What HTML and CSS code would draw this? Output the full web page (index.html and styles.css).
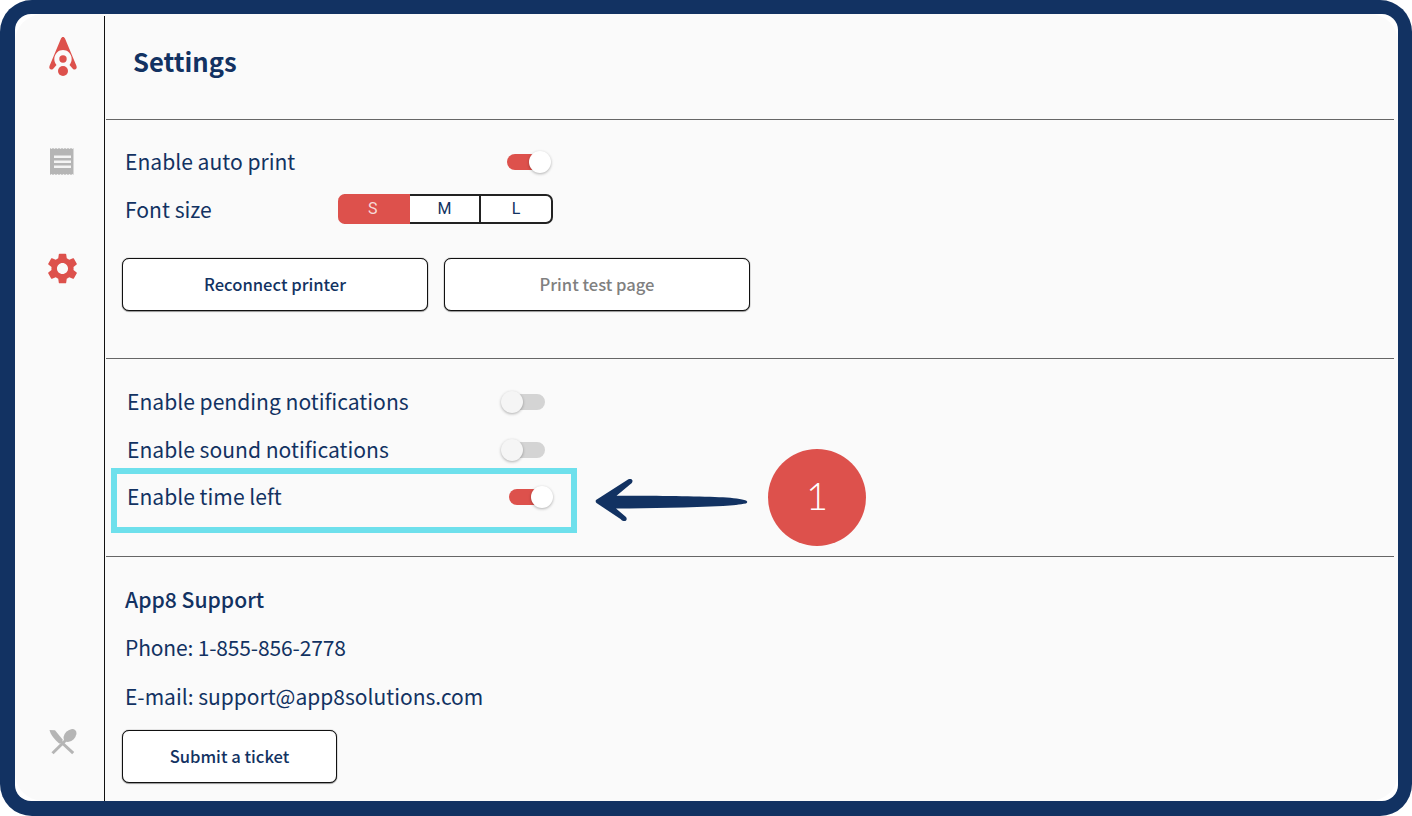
FILE: index.html
```html
<!DOCTYPE html>
<html lang="en">
<head>
    <meta charset="UTF-8">
    <meta name="viewport" content="width=device-width, initial-scale=1.0">
    <title>Settings</title>
    <link rel="stylesheet" href="styles.css">
</head>
<body>
    <div class="frame">
        <div class="screen">
            <div class="screen-inner">
                <nav class="sidebar">
                    <svg class="nav-logo" viewBox="0 0 30 40" width="30" height="40">
                        <path fill="#dd514c" d="M15 0 C16 0 16.500 .6 17 1.500 L28.500 29 C29.500 32 27 33.500 25 32 L21.500 28 C24.500 24.500 24.500 19 21 15.500 C17.500 12.300 12.500 12.300 9 15.500 C5.500 19 5.500 24.500 8.500 28 L5 32 C3 33.500 .5 32 1.500 29 L13 1.500 C13.500 .6 14 0 15 0 Z"/>
                        <circle fill="#dd514c" cx="15" cy="22" r="3.700"/>
                        <circle fill="#dd514c" cx="15" cy="34" r="5"/>
                    </svg>
                    <svg class="nav-receipt" viewBox="0 0 25 27" width="25" height="27">
                        <path fill="#b5b5b5" d="M0 0 l1.500 1 1.500 -1 1.500 1 1.500 -1 1.500 1 1.500 -1 1.500 1 1.500 -1 1.500 1 1.500 -1 1.500 1 1.500 -1 1.500 1 1.500 -1 1.500 1 1 -1 V27 l-1 -1 -1.500 1 -1.500 -1 -1.500 1 -1.500 -1 -1.500 1 -1.500 -1 -1.500 1 -1.500 -1 -1.500 1 -1.500 -1 -1.500 1 -1.500 -1 -1.500 1 -1.500 -1 -1.500 1 Z"/>
                        <path fill="#f4f4f4" d="M4 7.500 H21 V10 H4 Z M4 12.500 H21 V15 H4 Z M4 17.500 H21 V20 H4 Z"/>
                    </svg>
                    <svg class="nav-gear" viewBox="0 0 24 24" width="37" height="37">
                        <path fill="#dd514c" d="M19.140 12.940c.04-.3.060-.61.060-.94 0-.32-.02-.64-.07-.94l2.030-1.580c.18-.14.230-.41.120-.61l-1.920-3.320c-.12-.22-.37-.29-.59-.22l-2.390.96c-.5-.38-1.030-.7-1.620-.94l-.36-2.540c-.04-.24-.24-.41-.48-.41h-3.840c-.24 0-.43.170-.47.410l-.36 2.540c-.59.240-1.130.57-1.620.94l-2.390-.96c-.22-.08-.47 0-.59.220L2.740 8.870c-.12.210-.08.470.12.610l2.030 1.580c-.05.3-.09.630-.09.940s.02.640.07.940l-2.030 1.580c-.18.140-.23.410-.12.610l1.920 3.320c.12.220.37.290.59.220l2.390-.96c.5.380 1.030.7 1.620.94l.36 2.540c.05.240.24.410.48.410h3.840c.24 0 .44-.17.470-.41l.36-2.540c.59-.24 1.130-.56 1.620-.94l2.390.96c.22.080.47 0 .59-.22l1.920-3.320c.12-.22.070-.47-.12-.61l-2.010-1.580zM12 15.600c-1.980 0-3.600-1.620-3.600-3.600s1.620-3.600 3.600-3.600 3.600 1.620 3.600 3.600-1.620 3.600-3.600 3.600z"/>
                    </svg>
                    <svg class="nav-cutlery" viewBox="0 0 28 28" width="28" height="28">
                        <path fill="#b5b5b5" d="M.5 2 L6 2.300 L14 12 L10.500 15.700 C6 12 1.500 7 .5 2 Z"/>
                        <path stroke="#b5b5b5" stroke-width="3" d="M11 13 L24.200 25.200"/>
                        <ellipse fill="#b5b5b5" cx="21" cy="7.500" rx="7.500" ry="5.200" transform="rotate(-45 21 7.500)"/>
                        <path stroke="#b5b5b5" stroke-width="3" d="M17 12 L3.500 25.200"/>
                    </svg>
                </nav>

                <main class="content">
                    <header class="page-header">
                        <h1>Settings</h1>
                    </header>

                    <section class="section printer-section">
                        <div class="row">
                            <span class="label printer-label">Enable auto print</span>
                            <span class="toggle on"></span>
                        </div>
                        <div class="row">
                            <span class="label size-label">Font size</span>
                            <div class="segments">
                                <span class="segment active">S</span>
                                <span class="segment">M</span>
                                <span class="segment">L</span>
                            </div>
                        </div>
                        <div class="btn-row">
                            <button class="btn">Reconnect printer</button>
                            <button class="btn muted">Print test page</button>
                        </div>
                    </section>

                    <section class="section notify-section">
                        <div class="row">
                            <span class="label notify-label">Enable pending notifications</span>
                            <span class="toggle"></span>
                        </div>
                        <div class="row">
                            <span class="label notify-label">Enable sound notifications</span>
                            <span class="toggle"></span>
                        </div>
                        <div class="row">
                            <span class="label time-label">Enable time left</span>
                            <span class="toggle on"></span>
                        </div>
                    </section>

                    <section class="support">
                        <h2>App8 Support</h2>
                        <p class="phone">Phone: 1-855-856-2778</p>
                        <p>E-mail: support@app8solutions.com</p>
                        <button class="btn ticket-btn">Submit a ticket</button>
                    </section>
                </main>
            </div>
        </div>

        <div class="highlight"></div>
        <svg class="arrow" viewBox="0 0 162 52" width="162" height="52">
            <path fill="#123262" d="M6 26 L38 5.500 C40 4.500 42.500 5 42.500 7 C42.500 8.500 41.500 9.500 40 10.500 L26.500 21.700 C60 21.500 110 22 133 23.300 C143 24 152 25 156 26.500 Q158.500 28 156 29.500 C150 30.500 143 31.500 133 32 C100 33.500 60 34.500 26 34.500 L36 43 C37.500 45 36.500 47.500 33.500 47 C32.500 47 31.500 46 30.500 45 L6.500 29 C5.500 28 5.500 27 6 26 Z"/>
        </svg>
        <div class="step-badge">1</div>
    </div>
</body>
</html>
```

FILE: styles.css
```css
* { box-sizing: border-box; }
body {
    margin: 0;
    font-family: "Noto Sans CJK JP", "Noto Sans", sans-serif;
    color: #123262;
    background: #fff;
}
.frame {
    position: relative;
    width: 1412px;
    height: 816px;
    padding: 14px 14px 15px 15px;
    background: #123262;
    border-radius: 32px;
}
.screen {
    height: 100%;
    background: #fff;
    border-radius: 16px;
}
.screen-inner {
    display: flex;
    height: 100%;
    background: #fafafa;
    border-radius: 28px;
}

/* left rail */
.sidebar {
    display: flex;
    flex-direction: column;
    align-items: center;
    width: 90px;
    height: 785px;
    margin-top: 2px;
    border-right: 1px solid #111;
    padding-left: 6px;
}
.sidebar svg { display: block; flex: none; }
.nav-logo { margin-top: 21px; }
.nav-receipt { margin-top: 71px; }
.nav-gear { margin-top: 75px; margin-right: 1px; }
.nav-cutlery { margin-top: auto; margin-bottom: 45px; }

.content { flex: 1; padding-right: 4px; }
.page-header {
    height: 106px;
    padding: 30px 0 0 27px;
    border-bottom: 1px solid #666;
    margin-left: 1px;
}
h1 {
    margin: 0;
    font-size: 25.600px;
    line-height: 34px;
    font-weight: 700;
}
.section {
    margin-left: 1px;
    border-bottom: 1px solid #666;
}
.printer-section { height: 239px; padding: 18px 0 0 19px; }
.notify-section { height: 198px; padding: 19px 0 0 21px; }
.row {
    display: flex;
    align-items: center;
    height: 47.500px;
}
.label { font-size: 21.100px; line-height: 46px; padding-bottom: 1px; flex: none; }
.printer-label { width: 382px; }
.size-label { width: 213px; }
.notify-label { width: 374px; }
.time-label { width: 382px; }

.toggle {
    position: relative;
    display: block;
    width: 44px;
    height: 16px;
    margin-top: 1px;
}
.toggle::before {
    content: "";
    position: absolute;
    left: 5px;
    right: 0;
    top: 0;
    bottom: 0;
    background: #d4d4d4;
    border-radius: 8px;
}
.toggle::after {
    content: "";
    position: absolute;
    left: 0;
    top: -3px;
    width: 22px;
    height: 22px;
    border-radius: 50%;
    background: #f5f5f5;
    box-shadow: 0 1px 3px rgba(0, 0, 0, 0.3);
}
.toggle.on::before { left: 0; right: 5px; background: #dd514c; }
.toggle.on::after { left: 22px; background: #fff; }

.segments {
    display: flex;
    width: 215px;
    height: 30px;
}
.segment {
    width: 72px;
    background: #fff;
    text-align: center;
    font-family: Roboto, "Liberation Sans", sans-serif;
    font-size: 16px;
    line-height: 26px;
    border: 2px solid #222;
    border-left: 0;
}
.segment:last-child { border-radius: 0 7px 7px 0; }
.segment.active {
    background: #dd514c;
    border-color: #dd514c;
    border-radius: 7px 0 0 7px;
    color: #f6d9d7;
    box-shadow: 2px 0 0 0 #222;
}

.btn-row {
    display: flex;
    gap: 16px;
    margin: 25px 0 0 -3px;
}
.btn {
    width: 306px;
    height: 53px;
    padding: 0 0 1px;
    background: #fff;
    border: 1px solid #111;
    border-radius: 7px;
    font-family: inherit;
    font-size: 16.600px;
    font-weight: 500;
    color: #123262;
    box-shadow: 0 0 1px #222, 0 1px 1px rgba(0, 0, 0, 0.35);
}
.btn.muted { color: #808080; }

.support { padding: 23px 0 0 20px; }
h2 {
    margin: 0;
    font-size: 21.150px;
    line-height: 38px;
    font-weight: 500;
}
.support p {
    margin: 9px 0 0;
    font-size: 21px;
    line-height: 40px;
}
.support .phone { letter-spacing: -0.15px; }
.ticket-btn {
    display: block;
    width: 215px;
    margin: 14px 0 0 -3px;
}

/* tutorial callouts over the screen */
.highlight {
    position: absolute;
    left: 111px;
    top: 468px;
    width: 466px;
    height: 65px;
    border: 6px solid #6ee0ec;
}
.arrow {
    position: absolute;
    left: 590px;
    top: 474px;
}
.step-badge {
    position: absolute;
    left: 768px;
    top: 449px;
    width: 98px;
    height: 97px;
    border-radius: 50%;
    background: #dd514c;
    color: #fff;
    text-align: center;
    font-family: Lato, "Noto Sans", sans-serif;
    font-size: 38px;
    line-height: 92px;
    font-weight: 300;
}
```
